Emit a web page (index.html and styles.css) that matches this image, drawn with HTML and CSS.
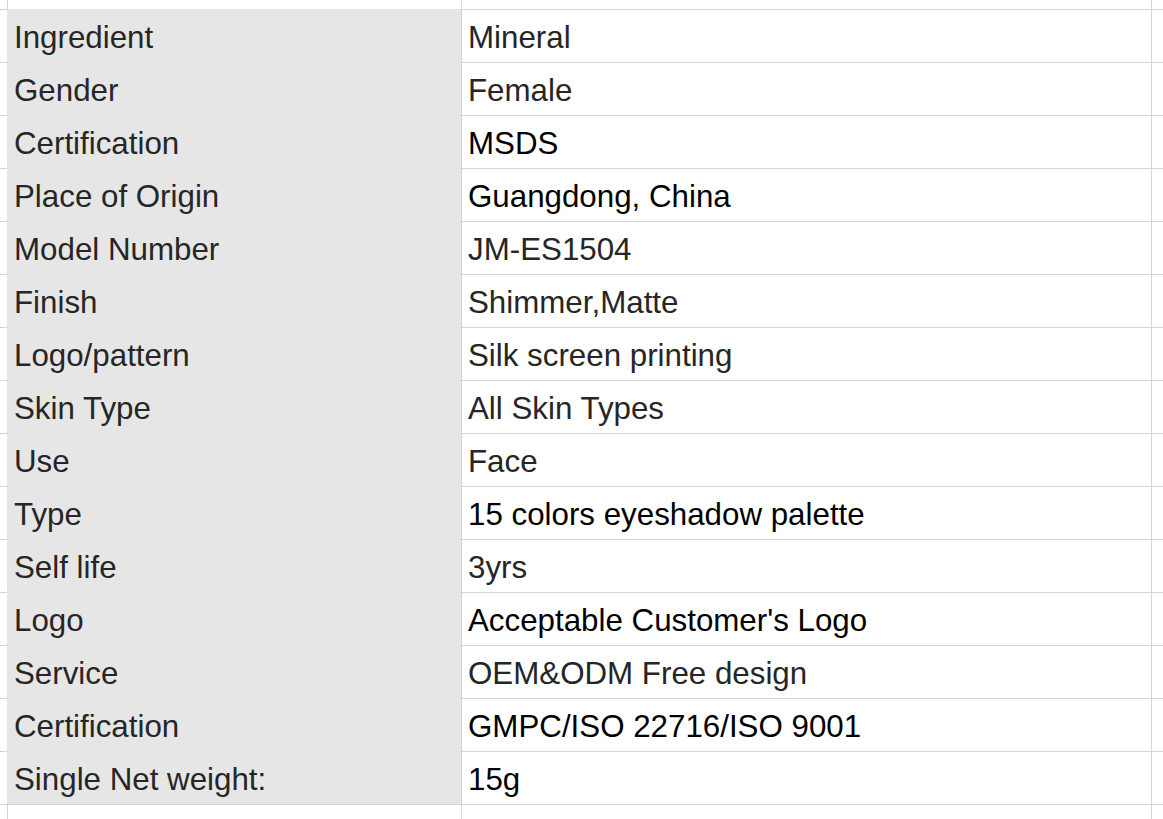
FILE: index.html
```html
<!DOCTYPE html>
<html>
<head>
<meta charset="utf-8">
<link rel="stylesheet" href="styles.css">
</head>
<body>
<div class="sheet">
  <div class="c edge"></div><div class="c"></div><div class="c"></div><div class="c"></div>

  <div class="c"></div><div class="c lbl">Ingredient</div><div class="c val">Mineral</div><div class="c"></div>
  <div class="c"></div><div class="c lbl">Gender</div><div class="c val">Female</div><div class="c"></div>
  <div class="c"></div><div class="c lbl">Certification</div><div class="c val dark">MSDS</div><div class="c"></div>
  <div class="c"></div><div class="c lbl">Place of Origin</div><div class="c val dark">Guangdong, China</div><div class="c"></div>
  <div class="c"></div><div class="c lbl">Model Number</div><div class="c val">JM-ES1504</div><div class="c"></div>
  <div class="c"></div><div class="c lbl">Finish</div><div class="c val">Shimmer,Matte</div><div class="c"></div>
  <div class="c"></div><div class="c lbl">Logo/pattern</div><div class="c val">Silk screen printing</div><div class="c"></div>
  <div class="c"></div><div class="c lbl">Skin Type</div><div class="c val">All Skin Types</div><div class="c"></div>
  <div class="c"></div><div class="c lbl">Use</div><div class="c val">Face</div><div class="c"></div>
  <div class="c"></div><div class="c lbl">Type</div><div class="c val dark">15 colors eyeshadow palette</div><div class="c"></div>
  <div class="c"></div><div class="c lbl">Self life</div><div class="c val">3yrs</div><div class="c"></div>
  <div class="c"></div><div class="c lbl">Logo</div><div class="c val dark">Acceptable Customer's Logo</div><div class="c"></div>
  <div class="c"></div><div class="c lbl">Service</div><div class="c val">OEM&amp;ODM Free design</div><div class="c"></div>
  <div class="c"></div><div class="c lbl">Certification</div><div class="c val dark">GMPC/ISO 22716/ISO 9001</div><div class="c"></div>
  <div class="c"></div><div class="c lbl">Single Net weight:</div><div class="c val dark">15g</div><div class="c"></div>

  <div class="c"></div><div class="c"></div><div class="c"></div><div class="c"></div>
</div>
</body>
</html>
```
FILE: styles.css
```css
html, body {
  margin: 0;
  padding: 0;
  background: #ffffff;
  overflow: hidden;
}
.sheet {
  display: grid;
  grid-template-columns: 7px 453px 689px 20px;
  grid-template-rows: 9px repeat(15, 52px) 20px;
  gap: 1px;
  background: #d4d4d4;
  width: 1172px;
  height: 830px;
  font-family: "Liberation Sans", Arial, sans-serif;
  font-size: 31.3px;
  color: #262626;
}
.c {
  background: #ffffff;
  display: flex;
  align-items: center;
  white-space: nowrap;
  overflow: visible;
}
.lbl {
  background: #e6e6e6;
  box-shadow: -1px -1px 0 #e6e6e6;
  padding: 4px 0 0 6px;
  position: relative;
}
.val {
  padding: 4px 0 0 6px;
}
.dark {
  color: #000000;
}
```
